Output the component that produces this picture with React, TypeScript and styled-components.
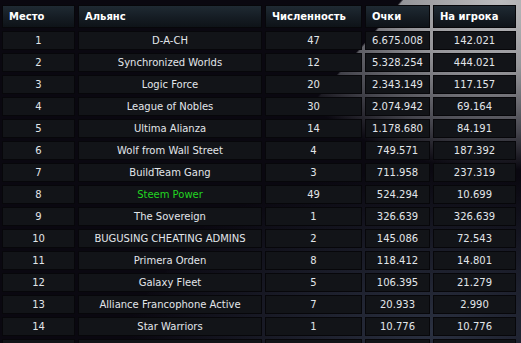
import styled, { createGlobalStyle } from "styled-components"

const GlobalStyle = createGlobalStyle`
    *{ box-sizing: border-box; }
    html, body{
        margin: 0;
        height: 100%;
        overflow: hidden;
    }
    body{
        font-family: "DejaVu Sans", Verdana, sans-serif;
        background-color: #0a0810;
        background-image:
            linear-gradient(131deg, #0a0810 49%, transparent 49.3%),
            radial-gradient(ellipse 240px 170px at 500px 0px, #bcbcbe 0%, #96969a 40%, #44444c 78%, transparent 100%),
            radial-gradient(ellipse 300px 160px at 430px 330px, #2a3040 0%, transparent 100%);
    }
`

type Row = {
    place: number | string
    name: string
    members: number | string
    points: string
    perPlayer: string
    own?: boolean
}

const rows: Row[] = [
    { place: 1, name: "D-A-CH", members: 47, points: "6.675.008", perPlayer: "142.021" },
    { place: 2, name: "Synchronized Worlds", members: 12, points: "5.328.254", perPlayer: "444.021" },
    { place: 3, name: "Logic Force", members: 20, points: "2.343.149", perPlayer: "117.157" },
    { place: 4, name: "League of Nobles", members: 30, points: "2.074.942", perPlayer: "69.164" },
    { place: 5, name: "Ultima Alianza", members: 14, points: "1.178.680", perPlayer: "84.191" },
    { place: 6, name: "Wolf from Wall Street", members: 4, points: "749.571", perPlayer: "187.392" },
    { place: 7, name: "BuildTeam Gang", members: 3, points: "711.958", perPlayer: "237.319" },
    { place: 8, name: "Steem Power", members: 49, points: "524.294", perPlayer: "10.699", own: true },
    { place: 9, name: "The Sovereign", members: 1, points: "326.639", perPlayer: "326.639" },
    { place: 10, name: "BUGUSING CHEATING ADMINS", members: 2, points: "145.086", perPlayer: "72.543" },
    { place: 11, name: "Primera Orden", members: 8, points: "118.412", perPlayer: "14.801" },
    { place: 12, name: "Galaxy Fleet", members: 5, points: "106.395", perPlayer: "21.279" },
    { place: 13, name: "Alliance Francophone Active", members: 7, points: "20.933", perPlayer: "2.990" },
    { place: 14, name: "Star Warriors", members: 1, points: "10.776", perPlayer: "10.776" },
    // next row only peeks in at the bottom edge
    { place: "", name: "", members: "", points: "", perPlayer: "" },
]

export default function App(){
    return(
        <>
            <GlobalStyle />
            <Wrapper>
                <Table>
                    <colgroup>
                        <col style={{ width: 73 }} />
                        <col style={{ width: 184 }} />
                        <col style={{ width: 97 }} />
                        <col style={{ width: 65 }} />
                        <col style={{ width: 83 }} />
                    </colgroup>
                    <thead>
                        <tr>
                            <Th>Место</Th>
                            <Th>Альянс</Th>
                            <Th>Численность</Th>
                            <Th>Очки</Th>
                            <Th>На игрока</Th>
                        </tr>
                    </thead>
                    <tbody>
                        {rows.map((r, i) => (
                            <tr key={i}>
                                <Td>{r.place}</Td>
                                <Td $own={r.own}>{r.name}</Td>
                                <Td>{r.members}</Td>
                                <Td>{r.points}</Td>
                                <Td>{r.perPlayer}</Td>
                            </tr>
                        ))}
                    </tbody>
                </Table>
            </Wrapper>
        </>
    )
}

const Wrapper = styled.div`
    padding-top: 2px;
    margin-left: -1px;
`

const Table = styled.table`
    width: 520px;
    table-layout: fixed;
    border-collapse: separate;
    border-spacing: 3px;
    font-size: 10px;
`

const Th = styled.th`
    height: 23px;
    padding: 0 6px;
    text-align: left;
    font-weight: bold;
    color: #ffffff;
    white-space: nowrap;
    border: 1px solid #07070a;
    background: linear-gradient(to bottom, #1f2a33 0%, #151c23 55%, #0e1318 100%);
`

const Td = styled.td<{ $own?: boolean }>`
    height: 19px;
    padding: 0 4px;
    text-align: center;
    color: ${p => p.$own ? "#22d422" : "#e2e6ea"};
    white-space: nowrap;
    border: 1px solid #07070a;
    background-color: #121418;
`
